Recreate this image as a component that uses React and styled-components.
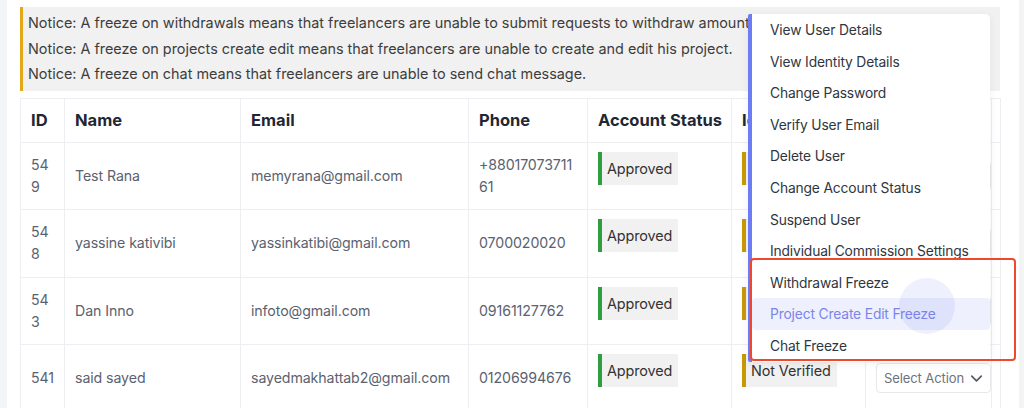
import React from "react";
import styled, { createGlobalStyle } from "styled-components";
import { ChevronDown } from "lucide-react";

const Global = createGlobalStyle`
  html, body { margin: 0; padding: 0; }
  body {
    background: #f3f4f6;
    font-family: Inter, "Noto Sans", sans-serif;
    overflow: hidden;
  }
`;

const Card = styled.div`
  position: relative;
  margin-left: 7px;
  width: 1012px;
  height: 408px;
  background: #fff;
  box-sizing: border-box;
  padding: 7px 19px 0 13px;
  overflow: hidden;
`;

const Notice = styled.div`
  background: #f1f1f1;
  border-left: 3px solid #e3a817;
  padding: 3px 0 4px 5px;
  color: #3d3d3d;
  font-size: 14.4px;
  line-height: 25.5px;
  white-space: nowrap;
  overflow: hidden;
`;

const Table = styled.table`
  margin-top: 7px;
  width: 980px;
  border-collapse: collapse;
  table-layout: fixed;
  border: 1px solid #eceef2;
`;

const Th = styled.th`
  text-align: left;
  font-size: 16.5px;
  font-weight: 700;
  color: #1f2733;
  padding: 0 10px;
  height: 43px;
  border: 1px solid #eceef2;
  white-space: nowrap;
  overflow: hidden;
`;

const Td = styled.td`
  font-size: 14.2px;
  letter-spacing: -0.1px;
  line-height: 22px;
  color: #5a6270;
  padding: ${(p) => (p.$top ? "9px 10px" : "11px 10px 11.5px")};
  vertical-align: ${(p) => (p.$top ? "top" : "middle")};
  border: 1px solid #eceef2;
  word-break: break-all;
  height: 44px;
`;

const Badge = styled.span`
  display: inline-block;
  background: #f1f1f1;
  border-left: 4px solid ${(p) => p.$color};
  color: #333;
  font-size: 14.4px;
  letter-spacing: -0.1px;
  line-height: 33px;
  padding: 0 6px 0 5px;
  white-space: nowrap;
`;

const SelectBtn = styled.div`
  display: flex;
  align-items: center;
  justify-content: space-between;
  width: 115px;
  height: 30px;
  box-sizing: border-box;
  border: 1px solid #e6e8ec;
  border-radius: 4px;
  padding: 0 4px 0 7px;
  color: #6b7280;
  font-size: 13px;
  letter-spacing: -0.1px;
  white-space: nowrap;
`;

const Menu = styled.ul`
  position: absolute;
  left: 741px;
  top: 14px;
  width: 242px;
  margin: 0;
  padding: 0;
  list-style: none;
  background: #fff;
  border-left: 4px solid #6b7cf6;
  border-radius: 2px 5px 5px 2px;
  box-shadow: 0 2px 8px rgba(0, 0, 0, 0.06);
  box-sizing: border-box;
  overflow: hidden;
`;

const Item = styled.li`
  position: relative;
  height: 31.6px;
  line-height: 32px;
  padding-left: 18px;
  font-size: 13.8px;
  letter-spacing: -0.15px;
  color: ${(p) => (p.$active ? "#7b84ea" : "#2f3640")};
  background: ${(p) => (p.$active ? "#eef0fd" : "transparent")};
  border-radius: ${(p) => (p.$active ? "4px" : "0")};
  white-space: nowrap;
  overflow: visible;
`;

const Ripple = styled.span`
  position: absolute;
  left: 147px;
  top: -20px;
  width: 56px;
  height: 56px;
  border-radius: 50%;
  background: rgba(99, 110, 235, 0.1);
  pointer-events: none;
`;

const ItemText = styled.span`
  position: relative;
`;

const Highlight = styled.div`
  position: absolute;
  left: 743px;
  top: 258px;
  width: 266px;
  height: 103px;
  box-sizing: border-box;
  border: 2px solid #f0482c;
  border-radius: 4px;
  pointer-events: none;
`;

const rows = [
  { id: "549", name: "Test Rana", email: "memyrana@gmail.com", phone: "+8801707371161", idv: "Not Verified" },
  { id: "548", name: "yassine kativibi", email: "yassinkatibi@gmail.com", phone: "0700020020", idv: "Not Verified" },
  { id: "543", name: "Dan Inno", email: "infoto@gmail.com", phone: "09161127762", idv: "Not Verified" },
  { id: "541", name: "said sayed", email: "sayedmakhattab2@gmail.com", phone: "01206994676", idv: "Not Verified" },
];

const menuItems = [
  "View User Details",
  "View Identity Details",
  "Change Password",
  "Verify User Email",
  "Delete User",
  "Change Account Status",
  "Suspend User",
  "Individual Commission Settings",
  "Withdrawal Freeze",
  "Project Create Edit Freeze",
  "Chat Freeze",
];

export default function App() {
  return (
    <>
      <Global />
      <Card>
        <Notice>
          <div>Notice: A freeze on withdrawals means that freelancers are unable to submit requests to withdraw amount.</div>
          <div>Notice: A freeze on projects create edit means that freelancers are unable to create and edit his project.</div>
          <div>Notice: A freeze on chat means that freelancers are unable to send chat message.</div>
        </Notice>
        <Table>
          <colgroup>
            <col style={{ width: 44 }} />
            <col style={{ width: 176 }} />
            <col style={{ width: 228 }} />
            <col style={{ width: 119 }} />
            <col style={{ width: 144 }} />
            <col style={{ width: 134 }} />
            <col style={{ width: 126 }} />
            <col style={{ width: 9 }} />
          </colgroup>
          <thead>
            <tr>
              <Th>ID</Th>
              <Th>Name</Th>
              <Th>Email</Th>
              <Th>Phone</Th>
              <Th>Account Status</Th>
              <Th>Identity Status</Th>
              <Th>Action</Th>
              <Th></Th>
            </tr>
          </thead>
          <tbody>
            {rows.map((r) => (
              <tr key={r.id}>
                <Td>{r.id}</Td>
                <Td>{r.name}</Td>
                <Td>{r.email}</Td>
                <Td>{r.phone}</Td>
                <Td $top>
                  <Badge $color="#2f9e3f">Approved</Badge>
                </Td>
                <Td $top>
                  <Badge $color="#c99806">{r.idv}</Badge>
                </Td>
                <Td>
                  <SelectBtn>
                    Select Action
                    <ChevronDown size={19} strokeWidth={2.2} color="#555b66" />
                  </SelectBtn>
                </Td>
                <Td></Td>
              </tr>
            ))}
          </tbody>
        </Table>
        <Menu>
          {menuItems.map((m) => {
            const active = m === "Project Create Edit Freeze";
            return (
              <Item key={m} $active={active}>
                {active && <Ripple />}
                <ItemText>{m}</ItemText>
              </Item>
            );
          })}
        </Menu>
        <Highlight />
      </Card>
    </>
  );
}
